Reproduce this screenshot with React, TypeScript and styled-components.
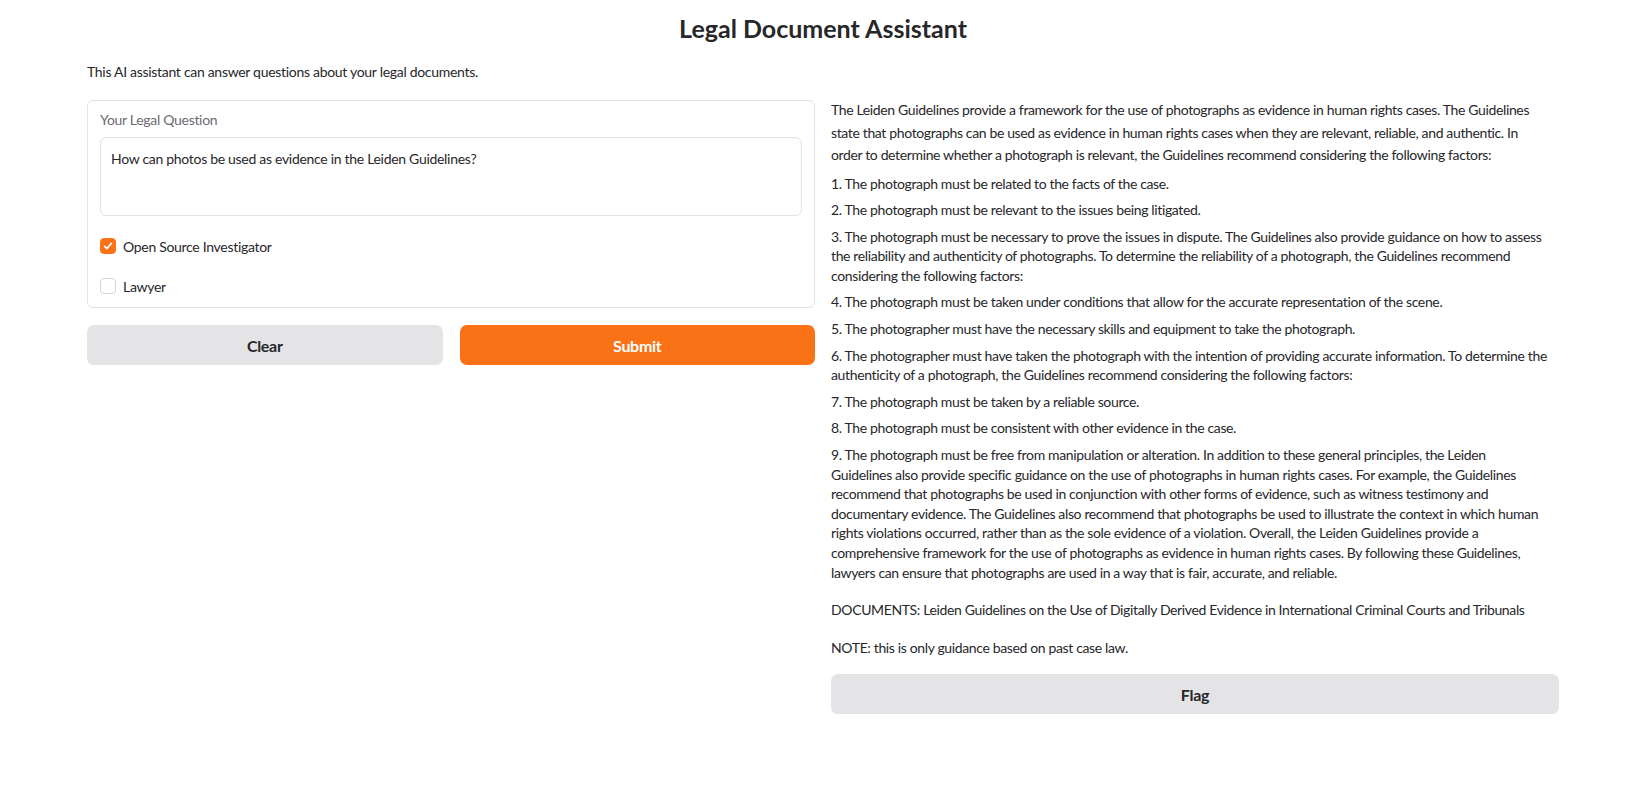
import React from "react";
import styled, { createGlobalStyle } from "styled-components";

const Global = createGlobalStyle`
  html, body {
    margin: 0;
    padding: 0;
    background: #ffffff;
  }
  body {
    font-family: Lato, "Noto Sans", sans-serif;
    color: #27272a;
    -webkit-font-smoothing: antialiased;
  }
  * { box-sizing: border-box; }
`;

const Page = styled.div`
  width: 1472px;
  margin-left: 87px;
  padding-top: 12px;
  padding-bottom: 40px;
`;

const Title = styled.h1`
  margin: 0;
  text-align: center;
  font-size: 25px;
  line-height: 32px;
  font-weight: 700;
  color: #27272a;
`;

const Intro = styled.p`
  margin: 18px 0 0;
  font-size: 14px;
  line-height: 20px;
  letter-spacing: -0.3px;
`;

const Columns = styled.div`
  margin-top: 18px;
  display: grid;
  grid-template-columns: 1fr 1fr;
  gap: 16px;
  align-items: start;
`;

const Column = styled.div`
  display: flex;
  flex-direction: column;
  gap: 17px;
`;

const Panel = styled.div`
  border: 1px solid #e4e4e7;
  border-radius: 6px;
  padding: 9px 12px 1px;
  background: #ffffff;
`;

const FieldLabel = styled.div`
  font-size: 14px;
  line-height: 20px;
  color: #6b6b73;
  margin-bottom: 7px;
  letter-spacing: -0.3px;
`;

const TextArea = styled.textarea`
  display: block;
  width: 100%;
  height: 79px;
  resize: none;
  border: 1px solid #e4e4e7;
  border-radius: 6px;
  padding: 10px;
  font-family: Lato, "Noto Sans", sans-serif;
  font-size: 14px;
  line-height: 21px;
  letter-spacing: -0.3px;
  color: #27272a;
  outline: none;
  box-shadow: 0 1px 2px rgba(0, 0, 0, 0.03) inset;
`;

const CheckGroup = styled.div`
  margin-top: 10px;
  display: flex;
  flex-direction: column;
`;

const CheckRow = styled.label`
  display: flex;
  align-items: center;
  height: 40px;
  gap: 7px;
  font-size: 14px;
  letter-spacing: -0.3px;
  cursor: pointer;
`;

const Box = styled.span<{ $checked: boolean }>`
  width: 16px;
  height: 16px;
  border-radius: 4px;
  display: inline-flex;
  align-items: center;
  justify-content: center;
  background: ${(p) => (p.$checked ? "#f97316" : "#ffffff")};
  border: 1px solid ${(p) => (p.$checked ? "#f97316" : "#d4d4d8")};
  flex: none;
`;

const ButtonRow = styled.div`
  display: grid;
  grid-template-columns: 1fr 1fr;
  gap: 17px;
`;

const Button = styled.button<{ $variant?: "primary" | "secondary" }>`
  height: 40px;
  border: none;
  border-radius: 7px;
  font-family: Lato, "Noto Sans", sans-serif;
  font-size: 16px;
  font-weight: 700;
  letter-spacing: -0.3px;
  cursor: pointer;
  background: ${(p) => (p.$variant === "primary" ? "#f97316" : "#e4e4e7")};
  color: ${(p) => (p.$variant === "primary" ? "#ffffff" : "#27272a")};
`;

const Answer = styled.div`
  margin-top: -1px;
  font-size: 14px;
  line-height: 19.6px;
  letter-spacing: -0.36px;
`;

const Para = styled.p<{ $lead?: boolean; $spaced?: boolean }>`
  margin: ${(p) => (p.$lead ? "0" : p.$spaced ? "18px 0 0" : "7px 0 0")};
  line-height: ${(p) => (p.$lead ? "22.5px" : "19.6px")};
`;

const Check = () => (
  <svg width="12" height="12" viewBox="0 0 16 16" fill="none">
    <path
      d="M3.5 8.5L6.5 11.5L12.5 4.5"
      stroke="#ffffff"
      strokeWidth="2.2"
      strokeLinecap="round"
      strokeLinejoin="round"
    />
  </svg>
);

const Checkbox = ({ label, checked }: { label: string; checked: boolean }) => (
  <CheckRow>
    <Box $checked={checked}>{checked && <Check />}</Box>
    {label}
  </CheckRow>
);

const Lines = ({ lines }: { lines: string[] }) => (
  <>
    {lines.map((l, i) => (
      <React.Fragment key={i}>
        {i > 0 && <br />}
        {l}
      </React.Fragment>
    ))}
  </>
);

const lead = [
  "The Leiden Guidelines provide a framework for the use of photographs as evidence in human rights cases. The Guidelines",
  "state that photographs can be used as evidence in human rights cases when they are relevant, reliable, and authentic. In",
  "order to determine whether a photograph is relevant, the Guidelines recommend considering the following factors:",
];

const items: string[][] = [
  ["1. The photograph must be related to the facts of the case."],
  ["2. The photograph must be relevant to the issues being litigated."],
  [
    "3. The photograph must be necessary to prove the issues in dispute. The Guidelines also provide guidance on how to assess",
    "the reliability and authenticity of photographs. To determine the reliability of a photograph, the Guidelines recommend",
    "considering the following factors:",
  ],
  ["4. The photograph must be taken under conditions that allow for the accurate representation of the scene."],
  ["5. The photographer must have the necessary skills and equipment to take the photograph."],
  [
    "6. The photographer must have taken the photograph with the intention of providing accurate information. To determine the",
    "authenticity of a photograph, the Guidelines recommend considering the following factors:",
  ],
  ["7. The photograph must be taken by a reliable source."],
  ["8. The photograph must be consistent with other evidence in the case."],
  [
    "9. The photograph must be free from manipulation or alteration. In addition to these general principles, the Leiden",
    "Guidelines also provide specific guidance on the use of photographs in human rights cases. For example, the Guidelines",
    "recommend that photographs be used in conjunction with other forms of evidence, such as witness testimony and",
    "documentary evidence. The Guidelines also recommend that photographs be used to illustrate the context in which human",
    "rights violations occurred, rather than as the sole evidence of a violation. Overall, the Leiden Guidelines provide a",
    "comprehensive framework for the use of photographs as evidence in human rights cases. By following these Guidelines,",
    "lawyers can ensure that photographs are used in a way that is fair, accurate, and reliable.",
  ],
];

export default function App() {
  return (
    <>
      <Global />
      <Page>
        <Title>Legal Document Assistant</Title>
        <Intro>This AI assistant can answer questions about your legal documents.</Intro>
        <Columns>
          <Column>
            <Panel>
              <FieldLabel>Your Legal Question</FieldLabel>
              <TextArea
                readOnly
                value="How can photos be used as evidence in the Leiden Guidelines?"
              />
              <CheckGroup>
                <Checkbox label="Open Source Investigator" checked />
                <Checkbox label="Lawyer" checked={false} />
              </CheckGroup>
            </Panel>
            <ButtonRow>
              <Button $variant="secondary">Clear</Button>
              <Button $variant="primary">Submit</Button>
            </ButtonRow>
          </Column>
          <Column>
            <Answer>
              <Para $lead>
                <Lines lines={lead} />
              </Para>
              {items.map((t) => (
                <Para key={t[0]}>
                  <Lines lines={t} />
                </Para>
              ))}
              <Para $spaced>
                DOCUMENTS: Leiden Guidelines on the Use of Digitally Derived Evidence in International Criminal Courts and Tribunals
              </Para>
              <Para $spaced>NOTE: this is only guidance based on past case law.</Para>
            </Answer>
            <Button $variant="secondary">Flag</Button>
          </Column>
        </Columns>
      </Page>
    </>
  );
}
